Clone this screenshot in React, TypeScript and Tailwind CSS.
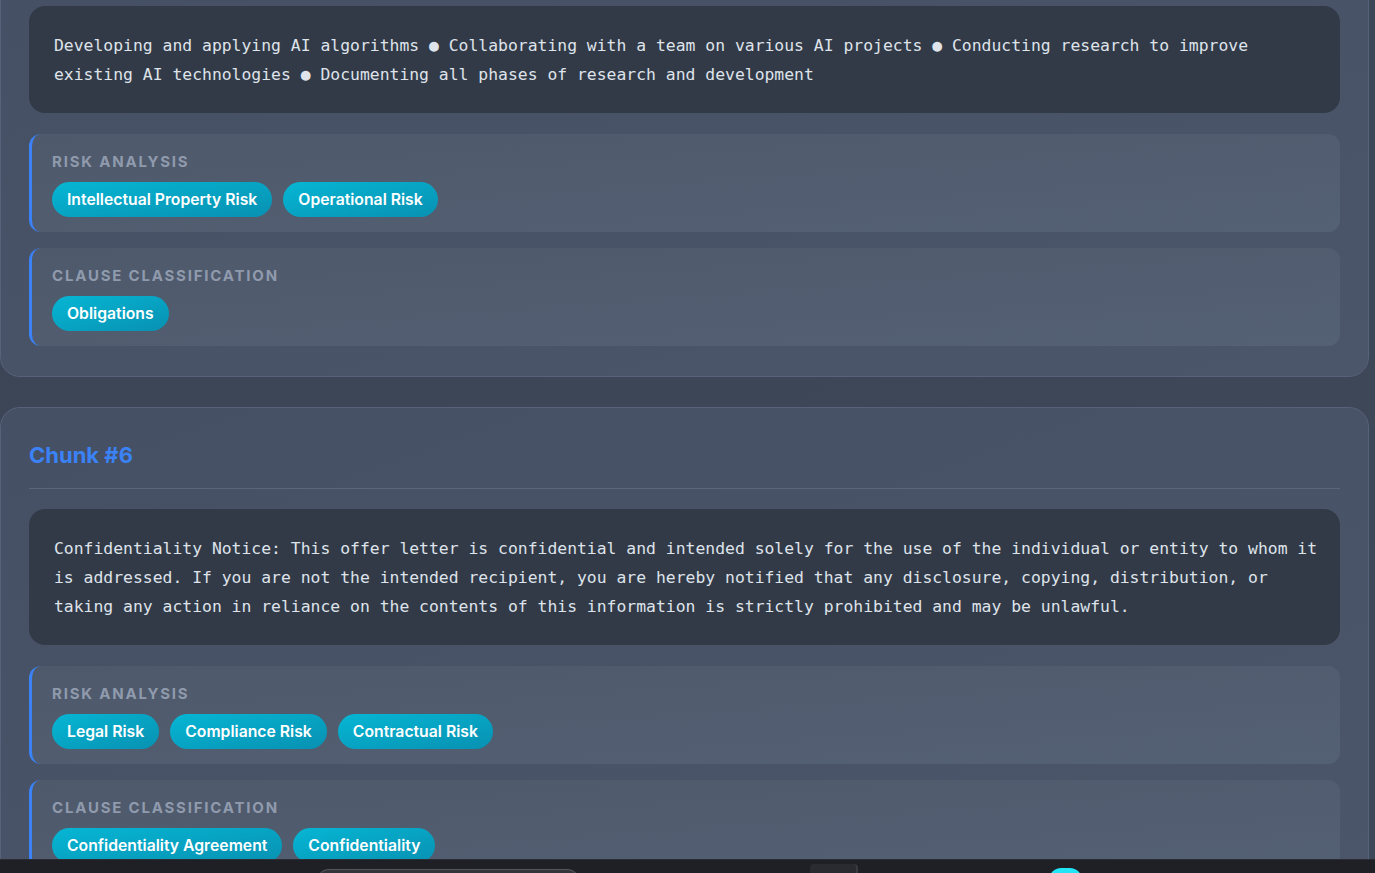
const chunks = [
  {
    id: 5,
    text: 'Developing and applying AI algorithms ● Collaborating with a team on various AI projects ● Conducting research to improve existing AI technologies ● Documenting all phases of research and development',
    risks: ['Intellectual Property Risk', 'Operational Risk'],
    clauses: ['Obligations'],
  },
  {
    id: 6,
    text: 'Confidentiality Notice: This offer letter is confidential and intended solely for the use of the individual or entity to whom it is addressed. If you are not the intended recipient, you are hereby notified that any disclosure, copying, distribution, or taking any action in reliance on the contents of this information is strictly prohibited and may be unlawful.',
    risks: ['Legal Risk', 'Compliance Risk', 'Contractual Risk'],
    clauses: ['Confidentiality Agreement', 'Confidentiality'],
  },
];

const TagSection = ({ title, tags }: { title: string; tags: string[] }) => (
  <div className="rounded-xl border-l-[3px] border-[#3b82f6] bg-gradient-to-br from-[#4e596b] to-[#546074] px-5 pt-[17px] pb-[15px]">
    <div className="mb-[9px] text-[15px] font-bold uppercase leading-[22px] tracking-[1.8px] text-[#8f9aad]">
      {title}
    </div>
    <div className="flex flex-wrap gap-[11px]">
      {tags.map((t) => (
        <span
          key={t}
          className="flex h-[35px] items-center rounded-full bg-gradient-to-br from-[#06b6d4] to-[#0891b2] px-[15px] text-[15.75px] font-semibold text-white"
        >
          {t}
        </span>
      ))}
    </div>
  </div>
);

const ChunkCard = ({
  chunk,
  className,
  showHeader = true,
}: {
  chunk: (typeof chunks)[number];
  className?: string;
  showHeader?: boolean;
}) => (
  <div
    className={`w-[1369px] rounded-[20px] border border-[#56627a] bg-gradient-to-br from-[#455064] to-[#4b566a] px-7 pt-7 pb-[30px] ${className ?? ''}`}
  >
    {showHeader && (
      <div className="mb-5 border-b border-[#5a667c] pb-[14px] text-[22px] font-bold leading-[38px] text-[#3b82f6]">
        Chunk #{chunk.id}
      </div>
    )}
    <div className="mb-[21px] rounded-2xl bg-[#323a48] pt-[25px] pb-6 pl-[25px] pr-[20px] font-['DejaVu_Sans_Mono',monospace] text-[16.4px] leading-[29px] text-[#dfe3ea]">
      {chunk.text}
    </div>
    <div className="flex flex-col gap-4">
      <TagSection title="Risk Analysis" tags={chunk.risks} />
      <TagSection title="Clause Classification" tags={chunk.clauses} />
    </div>
  </div>
);

export default function App() {
  return (
    <div className="relative h-screen overflow-hidden bg-gradient-to-br from-[#3b4556] to-[#3e4859] font-['Inter',sans-serif]">
      <div className="flex flex-col gap-[30px]">
        {/* previous chunk is scrolled past its heading */}
        <ChunkCard chunk={chunks[0]} showHeader={false} className="-mt-[23px]" />
        <ChunkCard chunk={chunks[1]} />
      </div>
      <div className="fixed inset-x-0 bottom-0 h-[14px] border-t border-[#2c2c33] bg-[#1f1f26]">
        <div className="absolute left-[318px] top-[9px] h-[10px] w-[260px] rounded-t-[10px] border border-[#55555c] bg-[#34343b]" />
        <div className="absolute left-[810px] top-[4px] h-[14px] w-[48px] rounded-[4px] border-r-2 border-[#3a3a42] bg-[#2a2a31]" />
        <div className="absolute left-[1049px] top-[8px] h-[12px] w-[33px] rounded-t-full bg-[#22e5f5]" />
      </div>
    </div>
  );
}
